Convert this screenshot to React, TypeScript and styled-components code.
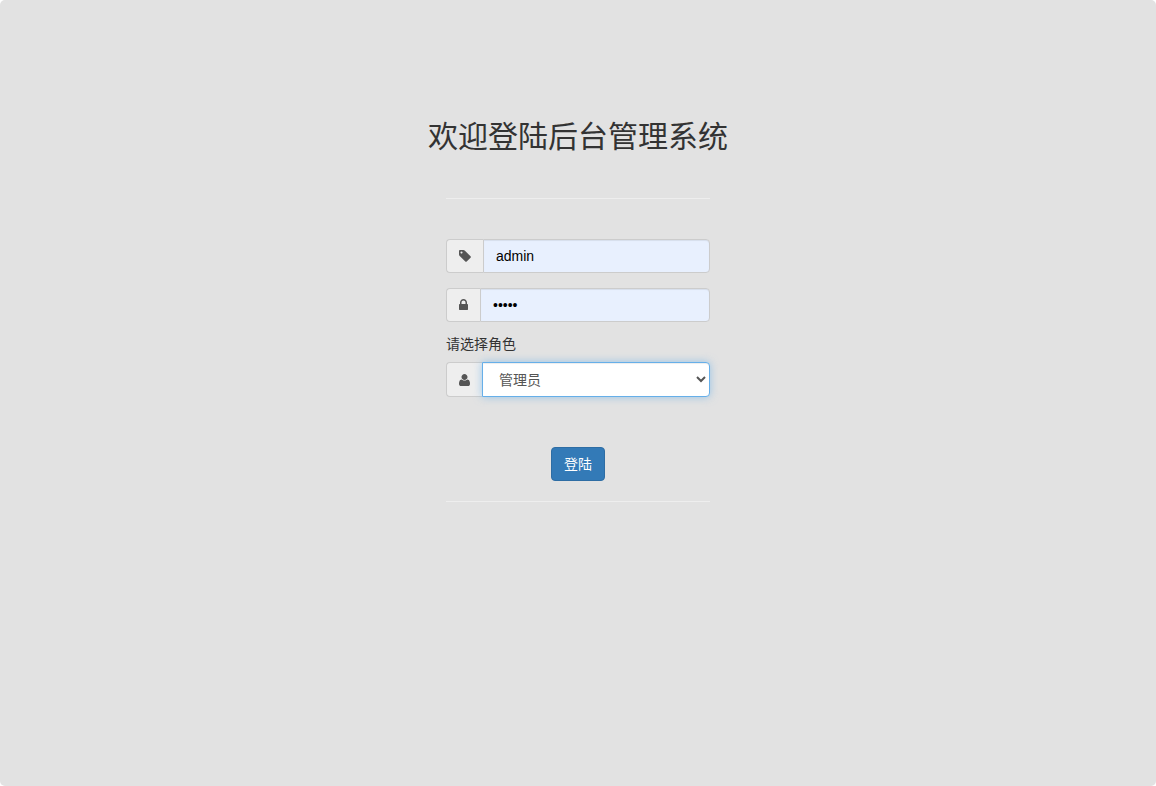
import React from 'react';
import styled, { createGlobalStyle } from 'styled-components';

const sans = `'Liberation Sans', 'Noto Sans CJK SC', sans-serif`;

const GlobalStyle = createGlobalStyle`
  *, *::before, *::after { box-sizing: border-box; }
  body {
    margin: 0;
    background: #fff;
    color: #333;
    font: 14px/20px ${sans};
  }
`;

const Page = styled.main`
  min-height: 100vh;
  padding: 120px 16px 32px;
  border-radius: 5px;
  background: #e2e2e2;
`;

const Title = styled.h1`
  margin: 0 0 44px;
  font-size: 30px;
  line-height: 34px;
  font-weight: 400;
  text-align: center;
`;

const Form = styled.form`
  display: flex;
  flex-direction: column;
  max-width: 264px;
  margin: 0 auto;
`;

const Divider = styled.hr`
  width: 100%;
  margin: 0;
  border: 0;
  border-top: 1px solid #eee;
`;

const Fields = styled.div`
  display: flex;
  flex-direction: column;
  padding: 40px 0 50px;
`;

const InputGroup = styled.div`
  display: flex;
  height: 34px;
  margin-bottom: 15px;
`;

const SelectGroup = styled(InputGroup)`
  height: 35px;
  margin-bottom: 0;
`;

const Addon = styled.label`
  display: flex;
  align-items: center;
  flex: none;
  padding: 0 12px;
  border: 1px solid #ccc;
  border-right: 0;
  border-radius: 4px 0 0 4px;
  background: #eee;
  color: #555;
`;

const Glyph = styled.svg`
  display: block;
  height: 14px;
  fill: currentColor;
`;

const Input = styled.input`
  flex: 1;
  min-width: 0;
  padding: 6px 12px;
  border: 1px solid #ccc;
  border-radius: 0 4px 4px 0;
  outline: 0;
  background: #e8f0fe;
  box-shadow: inset 0 1px 1px rgba(0, 0, 0, 0.075);
  color: #000;
  font: 14px/20px ${sans};
`;

const Select = styled.select`
  flex: 1;
  min-width: 0;
  padding: 6px 12px;
  border: 1px solid #66afe9;
  border-radius: 0 4px 4px 0;
  outline: 0;
  background: #fff;
  box-shadow: inset 0 1px 1px rgba(0, 0, 0, 0.075), 0 0 8px rgba(102, 175, 233, 0.6);
  color: #555;
  font: 14px/20px ${sans};
`;

const RoleLabel = styled.label`
  margin: -3px 0 8px;
`;

const SubmitButton = styled.button`
  align-self: center;
  margin-bottom: 20px;
  padding: 6px 12px;
  border: 1px solid #2e6da4;
  border-radius: 4px;
  background: #337ab7;
  color: #fff;
  font: 14px/20px ${sans};
  cursor: pointer;
`;

const glyphs = {
  tag: {
    x: 128,
    width: 1536,
    d: 'M576 448q0-53-37.5-90.5t-90.5-37.5-90.5 37.5-37.5 90.5 37.5 90.5 90.5 37.5 90.5-37.5 37.5-90.5zm1067 576q0 53-37 90l-491 492q-39 37-91 37-53 0-90-37l-715-716q-38-37-64.5-101t-26.5-117v-416q0-52 38-90t90-38h416q53 0 117 26.5t102 64.5l715 714q37 39 37 91z',
  },
  lock: {
    x: 320,
    width: 1152,
    d: 'M640 768h512v-192q0-106-75-181t-181-75-181 75-75 181v192zm832 96v576q0 40-28 68t-68 28h-960q-40 0-68-28t-28-68v-576q0-40 28-68t68-28h32v-192q0-184 132-316t316-132 316 132 132 316v192h32q40 0 68 28t28 68z',
  },
  user: {
    x: 192,
    width: 1408,
    d: 'M1600 1405q0 120-73 189.5t-194 69.5h-874q-121 0-194-69.5t-73-189.5q0-53 3.5-103.5t14-109 26.5-108.5 43-97.5 62-81 85.5-53.5 111.5-20q9 0 42 21.5t74.5 48 108 48 133.5 21.5 133.5-21.5 108-48 74.5-48 42-21.5q61 0 111.5 20t85.5 53.5 62 81 43 97.5 26.5 108.5 14 109 3.5 103.5zm-320-893q0 159-112.5 271.5t-271.5 112.5-271.5-112.5-112.5-271.5 112.5-271.5 271.5-112.5 271.5 112.5 112.5 271.5z',
  },
};

function Icon({ name }: { name: keyof typeof glyphs }) {
  const { x, width, d } = glyphs[name];
  return (
    <Glyph viewBox={`${x} 0 ${width} 1792`} width={width / 128} aria-hidden="true">
      <path d={d} />
    </Glyph>
  );
}

export default function App() {
  return (
    <>
      <GlobalStyle />
      <Page>
        <Title>欢迎登陆后台管理系统</Title>
        <Form onSubmit={(e) => e.preventDefault()}>
          <Divider />
          <Fields>
            <InputGroup>
              <Addon htmlFor="username"><Icon name="tag" /></Addon>
              <Input id="username" type="text" aria-label="用户名" defaultValue="admin" />
            </InputGroup>
            <InputGroup>
              <Addon htmlFor="password"><Icon name="lock" /></Addon>
              <Input id="password" type="password" aria-label="密码" defaultValue="admin" />
            </InputGroup>
            <RoleLabel htmlFor="role">请选择角色</RoleLabel>
            <SelectGroup>
              <Addon as="span"><Icon name="user" /></Addon>
              <Select id="role" defaultValue="admin">
                <option value="admin">管理员</option>
              </Select>
            </SelectGroup>
          </Fields>
          <SubmitButton type="submit">登陆</SubmitButton>
          <Divider />
        </Form>
      </Page>
    </>
  );
}
